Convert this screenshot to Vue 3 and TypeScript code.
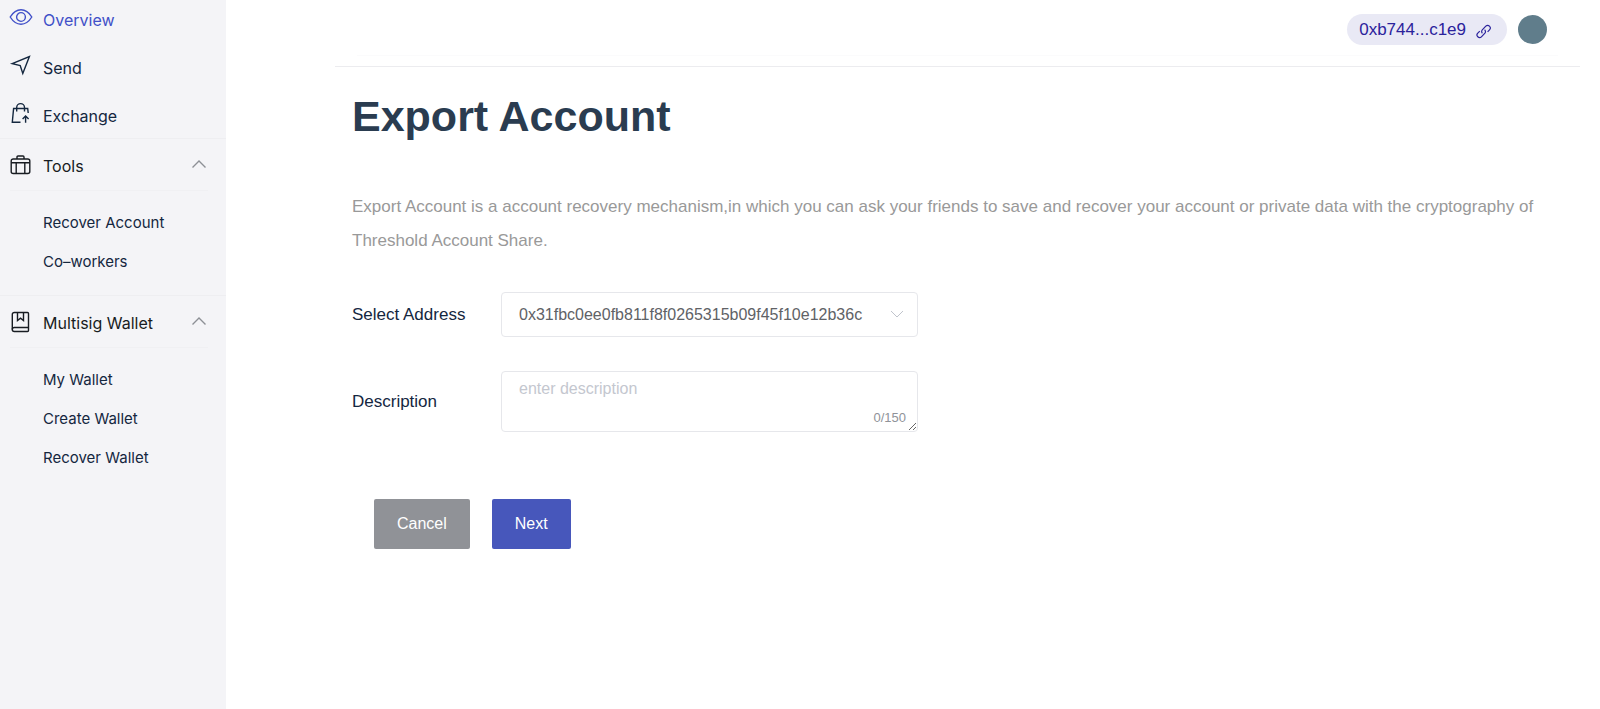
<script setup lang="ts">
import { ref } from 'vue'

interface MenuLink {
  label: string
  icon: 'eye' | 'send' | 'bag'
  active?: boolean
}
interface MenuGroup {
  label: string
  icon: 'case' | 'book'
  children: string[]
}

const links: MenuLink[] = [
  { label: 'Overview', icon: 'eye', active: true },
  { label: 'Send', icon: 'send' },
  { label: 'Exchange', icon: 'bag' },
]
const groups = ref<(MenuGroup & { open: boolean })[]>([
  { label: 'Tools', icon: 'case', open: true, children: ['Recover Account', 'Co–workers'] },
  { label: 'Multisig Wallet', icon: 'book', open: true, children: ['My Wallet', 'Create Wallet', 'Recover Wallet'] },
])
const icons: Record<string, string[]> = {
  eye: [
    'M1.2 12C4 7.5 7.5 4.8 12 4.8S20 7.5 22.8 12C20 16.5 16.5 19.2 12 19.2S4 16.5 1.2 12Z',
    'M12 7.6a4.4 4.4 0 1 0 0 8.8 4.4 4.4 0 0 0 0-8.8Z',
  ],
  send: ['M3.2 10.6 20.4 3.6 13.8 20.4 11.2 12.6Z'],
  bag: [
    'M11.5 21.3H3.3L4.6 7.5H18.7L19.2 12',
    'M7.7 10.5V6.5a3.9 3.9 0 0 1 7.8 0V10.5',
    'M16.6 21.8V15.2M13.6 18l3-3 3 3',
  ],
  case: [
    'M4.2 6H18.8a2 2 0 0 1 2 2V18.5a2 2 0 0 1-2 2H4.2a2 2 0 0 1-2-2V8a2 2 0 0 1 2-2Z',
    'M8 6V4a1 1 0 0 1 1-1h5a1 1 0 0 1 1 1V6',
    'M2.2 9.8H20.800M7.200 9.8V20.5M15.8 9.8V20.5',
  ],
  book: [
    'M5.300 2.500H18.500a1 1 0 0 1 1 1V20.500a1 1 0 0 1-1 1H5.300a2 2 0 0 1-2-2V4.500a2 2 0 0 1 2-2Z',
    'M3.300 19.500a2 2 0 0 1 2-2H19.500',
    'M8.500 2.500V10.500L11.500 8.200 14.500 10.500V2.500',
  ],
}

const address = ref('0x31fbc0ee0fb811f8f0265315b09f45f10e12b36c')
const description = ref('')
</script>

<template>
  <div class="layout">
    <nav class="sidebar">
      <ul class="links">
        <li v-for="l in links" :key="l.label">
          <a href="#" class="entry" :class="{ active: l.active }">
            <svg class="icon" viewBox="0 0 24 24"><path v-for="d in icons[l.icon]" :key="d" :d="d" /></svg>
            <span>{{ l.label }}</span>
          </a>
        </li>
      </ul>
      <section v-for="g in groups" :key="g.label" class="group">
        <button type="button" class="group-head" :aria-expanded="g.open" @click="g.open = !g.open">
          <svg class="icon" viewBox="0 0 24 24"><path v-for="d in icons[g.icon]" :key="d" :d="d" /></svg>
          <span>{{ g.label }}</span>
          <svg class="chevron" :class="{ closed: !g.open }" viewBox="0 0 14 8"><path d="M0.5 7.5 7 1 13.5 7.5" /></svg>
        </button>
        <ul v-if="g.open" class="children">
          <li v-for="c in g.children" :key="c"><a href="#">{{ c }}</a></li>
        </ul>
      </section>
    </nav>

    <div class="page">
      <header class="topbar">
        <div class="topbar-inner">
          <button type="button" class="account">
            <span>0xb744...c1e9</span>
            <svg viewBox="0 0 16 16">
              <path d="M6.400 10.200A2.400 2.400 0 0 1 6.300 6.800L9.800 3.200A2.500 2.500 0 0 1 13.500 6.800L11.600 8.800" />
              <path d="M8.600 6.800A2.400 2.400 0 0 1 8.900 10.200L5.400 13.800A2.500 2.500 0 0 1 1.800 10.200L3.800 8.200" />
            </svg>
          </button>
          <button type="button" class="avatar" aria-label="Account"></button>
        </div>
      </header>

      <main class="content">
        <h1>Export Account</h1>
        <p class="intro">
          Export Account is a account recovery mechanism,in which you can ask your friends to save and recover your
          account or private data with the cryptography of Threshold Account Share.
        </p>
        <form @submit.prevent>
          <div class="row">
            <label for="address">Select Address</label>
            <div class="field">
              <select id="address" v-model="address">
                <option :value="address">{{ address }}</option>
              </select>
              <svg class="arrow" viewBox="0 0 14 8"><path d="M1 1 7 7 13 1" /></svg>
            </div>
          </div>
          <div class="row">
            <label for="description">Description</label>
            <div class="field">
              <textarea id="description" v-model="description" maxlength="150" placeholder="enter description"></textarea>
              <span class="count">{{ description.length }}/150</span>
            </div>
          </div>
          <div class="actions">
            <button type="button" class="cancel">Cancel</button>
            <button type="submit" class="next">Next</button>
          </div>
        </form>
      </main>
    </div>
  </div>
</template>

<style>
body {
  margin: 0;
  background: #fff;
}
</style>

<style scoped>
* {
  box-sizing: border-box;
}
.layout {
  display: flex;
  min-height: 100vh;
  font-family: "Liberation Sans", Helvetica, Arial, sans-serif;
  font-size: 17px;
  color: #14273f;
}
button,
select,
textarea {
  font-family: inherit;
}
ul {
  list-style: none;
  margin: 0;
  padding: 0;
}
a {
  color: inherit;
  text-decoration: none;
}
svg {
  fill: none;
  stroke: currentColor;
}

.sidebar {
  flex: 0 0 226px;
  background: #f4f4f7;
  font-family: Inter, "Liberation Sans", sans-serif;
  font-size: 16px;
}
.links {
  display: flex;
  flex-direction: column;
  gap: 8px;
  padding-bottom: 2px;
}
.entry {
  display: flex;
  align-items: center;
  gap: 10px;
  height: 40px;
  padding-left: 9px;
}
.entry.active {
  color: #4150c8;
}
.icon {
  flex: none;
  width: 24px;
  height: 24px;
  stroke-width: 1.4;
  margin-bottom: 6px;
}
.group {
  border-top: 1px solid #eeeef1;
  padding-bottom: 14px;
}
.group-head {
  display: flex;
  align-items: center;
  gap: 10px;
  width: 100%;
  height: 51px;
  padding: 2px 20px 0 9px;
  border: 0;
  background: none;
  color: #181c22;
  font-size: 16px;
}
.group-head .icon {
  margin-bottom: 2px;
}
.chevron {
  width: 14px;
  height: 8px;
  margin-left: auto;
  margin-bottom: 4px;
  color: #8d9095;
  stroke-width: 1.4;
}
.chevron.closed {
  transform: rotate(180deg);
}
.children {
  margin: 0 18px 0 10px;
  padding: 12px 0 0 33px;
  border-top: 1px solid #f0f0f3;
  font-size: 15px;
}
.children li {
  height: 39px;
  line-height: 39px;
}

.page {
  flex: 1;
  min-width: 0;
  padding: 0 20px 0 109px;
}
.topbar {
  height: 67px;
  border-bottom: 1px solid #ececef;
}
.topbar-inner {
  display: flex;
  justify-content: flex-end;
  align-items: center;
  gap: 11px;
  height: 56px;
  margin: 0 22px;
  padding: 4px 11px 0 0;
  border-bottom: 1px solid #fbfbfc;
}
.account {
  display: flex;
  align-items: center;
  gap: 10px;
  height: 31px;
  padding: 0 15px 0 12px;
  border: 0;
  border-radius: 16px;
  background: #e9e9f5;
  color: #2b229c;
  font-size: 17px;
}
.account svg {
  width: 16px;
  height: 16px;
  margin-top: 2px;
  stroke-width: 1.2;
}
.avatar {
  width: 29px;
  height: 29px;
  padding: 0;
  border: 0;
  border-radius: 50%;
  background: #607d8b;
}

.content {
  padding: 23px 16px 40px 17px;
}
h1 {
  margin: 0;
  font-size: 43px;
  line-height: 52px;
  color: #2a3c50;
}
.intro {
  margin: 48px 0 0;
  line-height: 34px;
  color: #999;
}
form {
  margin-top: 34px;
}
.row {
  display: flex;
  align-items: center;
  margin-bottom: 34px;
}
.row label {
  flex: 0 0 149px;
}
.field {
  position: relative;
  display: flex;
  width: 417px;
}
select,
textarea {
  width: 100%;
  border: 1px solid #e6e7eb;
  border-radius: 4px;
  background: #fff;
  color: #606266;
  font-size: 16px;
  outline: none;
}
select {
  height: 45px;
  padding: 0 17px 1px;
  appearance: none;
}
textarea {
  display: block;
  height: 61px;
  padding: 5px 17px;
  line-height: 24px;
  resize: vertical;
}
textarea::placeholder {
  color: #c4c7cf;
}
.arrow {
  position: absolute;
  right: 14px;
  top: 18px;
  width: 14px;
  height: 8px;
  color: #c0c4cc;
  pointer-events: none;
}
.count {
  position: absolute;
  right: 12px;
  bottom: 5px;
  font-size: 13px;
  line-height: 18px;
  color: #909399;
}
.actions {
  display: flex;
  gap: 22px;
  margin: 67px 0 0 22px;
}
.actions button {
  height: 50px;
  padding: 0 23px;
  border: 0;
  border-radius: 2px;
  color: #fff;
  font-size: 16px;
}
.actions .cancel {
  background: #909297;
}
.actions .next {
  background: #4757bb;
}
</style>
